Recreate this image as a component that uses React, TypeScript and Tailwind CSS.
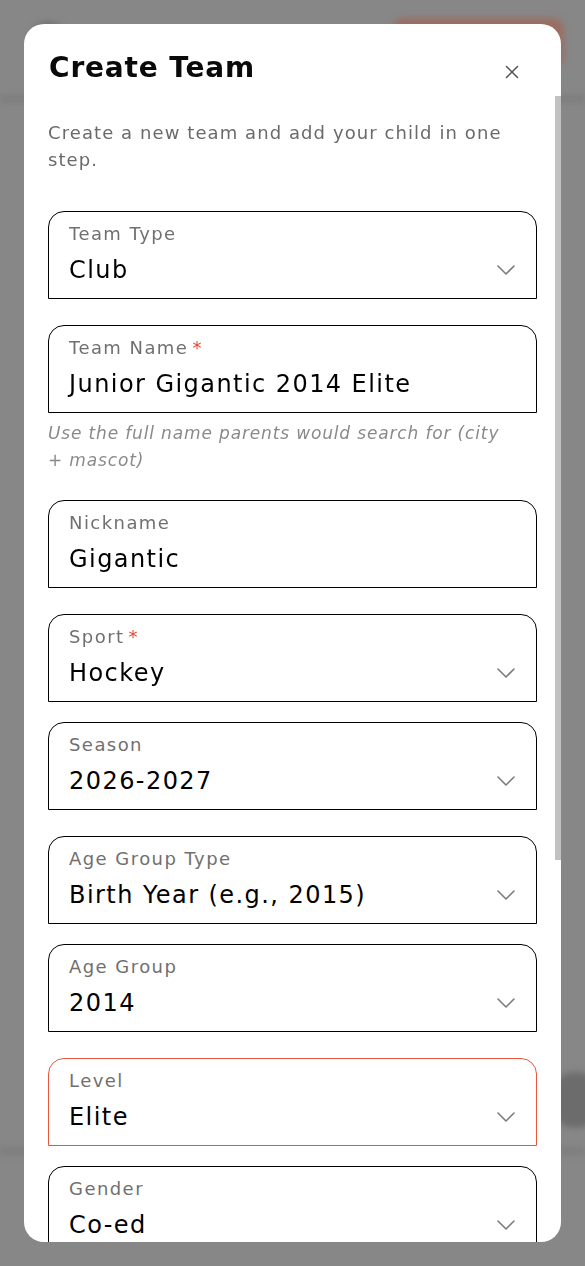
import { ChevronDown, X } from "lucide-react";

type Field = {
  label: string;
  value: string;
  required?: boolean;
  select?: boolean;
  active?: boolean;
  hint?: string;
  gap: string;
};

const fields: Field[] = [
  { label: "Team Type", value: "Club", select: true, gap: "mt-0" },
  {
    label: "Team Name",
    value: "Junior Gigantic 2014 Elite",
    required: true,
    hint: "Use the full name parents would search for (city + mascot)",
    gap: "mt-[26px]",
  },
  { label: "Nickname", value: "Gigantic", gap: "mt-[26px]" },
  { label: "Sport", value: "Hockey", required: true, select: true, gap: "mt-[26px]" },
  { label: "Season", value: "2026-2027", select: true, gap: "mt-5" },
  { label: "Age Group Type", value: "Birth Year (e.g., 2015)", select: true, gap: "mt-[26px]" },
  { label: "Age Group", value: "2014", select: true, gap: "mt-5" },
  { label: "Level", value: "Elite", select: true, active: true, gap: "mt-[26px]" },
  { label: "Gender", value: "Co-ed", select: true, gap: "mt-5" },
];

const FieldBox = ({ f }: { f: Field }) => (
  <div className={f.gap}>
    <div
      className={`flex items-center rounded-t-2xl border bg-white pl-5 pr-[14px] pt-[10px] pb-3 ${
        f.active ? "border-[#e5583c]" : "border-black"
      }`}
    >
      <div className="flex-1 flex flex-col gap-2">
        <span className="text-[18px] leading-6 tracking-[0.08em] text-[#707070]">
          {f.label}
          {f.required && <span className="ml-1 text-[#e4472d]">*</span>}
        </span>
        <span className="text-[24px] leading-8 tracking-[0.06em] text-black">{f.value}</span>
      </div>
      {f.select && (
        <ChevronDown className="mt-[32px] h-8 w-8 text-[#7a7a7a]" strokeWidth={1.2} />
      )}
    </div>
    {f.hint && (
      <p className="mt-[7px] pr-6 text-[17px] leading-[27px] italic tracking-[0.05em] text-[#8a8a8a]">
        {f.hint}
      </p>
    )}
  </div>
);

export default function App() {
  return (
    <div className="relative h-[1266px] w-[585px] overflow-hidden bg-[#878787] font-['DejaVu_Sans',sans-serif]">
      {/* blurred page behind the overlay */}
      <div className="absolute inset-0 blur-[3px]">
        <div className="absolute left-[30px] top-[22px] h-9 w-9 rounded-full bg-[#6f6f6f]" />
        <div className="absolute left-[392px] top-[18px] h-[50px] w-[172px] rounded-xl bg-[#9b6d62]" />
        <div className="absolute left-0 top-[96px] h-[6px] w-full bg-[#7b7b7b]" />
        <div className="absolute left-0 top-[1148px] h-[6px] w-full bg-[#7b7b7b]" />
        <div className="absolute left-[548px] top-[1072px] h-14 w-14 rounded-full bg-[#6c6c6c]" />
      </div>

      <div className="relative flex h-full w-full p-6">
        <div className="flex h-full w-full flex-col overflow-hidden rounded-[20px] bg-white">
          <div className="flex items-start justify-between pl-[25px] pr-[38px] pt-[26px]">
            <h1 className="text-[28px] font-bold leading-9 tracking-[0.03em] text-[#0a0a0a]">
              Create Team
            </h1>
            <X className="mt-[11px] h-[22px] w-[22px] text-[#555]" strokeWidth={1.7} />
          </div>

          <div className="relative mt-[10px] flex-1 overflow-hidden">
            <div className="pl-6 pr-6 pt-[23px]">
              <p className="pr-8 text-[18px] leading-[27px] tracking-[0.06em] text-[#6a6a6a]">
                Create a new team and add your child in one step.
              </p>
              <div className="mt-[38px] flex flex-col">
                {fields.map((f) => (
                  <FieldBox key={f.label} f={f} />
                ))}
              </div>
            </div>
            <div className="absolute right-0 top-0 h-[764px] w-[6px] bg-[#c1c1c1]" />
          </div>
        </div>
      </div>
    </div>
  );
}
